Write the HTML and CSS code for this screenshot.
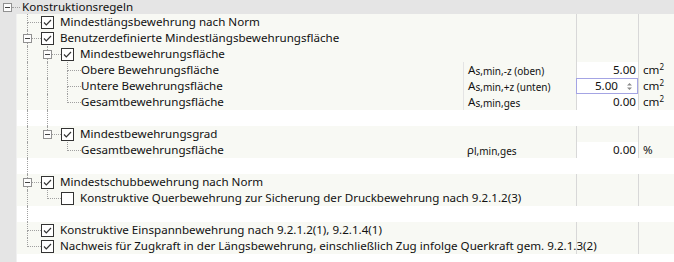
FILE: index.html
```html
<!DOCTYPE html>
<html lang="de">

<head>
    <meta charset="UTF-8">
    <title>Konstruktionsregeln</title>
    <link rel="stylesheet" href="styles.css">
</head>

<body>
    <div class="grid">
        <div class="head">
            <span class="box"></span><span class="head-dash"></span><span class="head-label">Konstruktionsregeln</span>
        </div>
        <div class="main">
            <div class="strip"></div>
            <div class="rows">
                <!-- Mindestlaengsbewehrung -->
                <div class="row">
                    <div class="tree">
                        <span class="c tee"><i class="up"></i><i class="down"></i></span>
                        <span class="cb on"><svg viewBox="0 0 11 11"><path d="M2 5.5 L4.3 7.8 L9 3"/></svg></span>
                        <span class="label">Mindestlängsbewehrung nach Norm</span>
                    </div>
                    <div class="sym"></div><div class="val"></div><div class="unit"></div>
                </div>
                <div class="row">
                    <div class="tree">
                        <span class="c tee"><i class="up short"></i><span class="mid"><span class="box"></span><i class="dash"></i></span><i class="down"></i></span>
                        <span class="cb on"><svg viewBox="0 0 11 11"><path d="M2 5.5 L4.3 7.8 L9 3"/></svg></span>
                        <span class="label">Benutzerdefinierte Mindestlängsbewehrungsfläche</span>
                    </div>
                    <div class="sym"></div><div class="val"></div><div class="unit"></div>
                </div>
                <div class="row">
                    <div class="tree">
                        <i class="g v"></i>
                        <span class="c tee"><i class="up short"></i><span class="mid"><span class="box"></span><i class="dash"></i></span><i class="down"></i></span>
                        <span class="cb on"><svg viewBox="0 0 11 11"><path d="M2 5.5 L4.3 7.8 L9 3"/></svg></span>
                        <span class="label">Mindestbewehrungsfläche</span>
                    </div>
                    <div class="sym"></div><div class="val"></div><div class="unit"></div>
                </div>
                <div class="row">
                    <div class="tree">
                        <i class="g v"></i><i class="g v"></i>
                        <span class="c tee"><i class="up"></i><i class="down"></i></span>
                        <span class="label">Obere Bewehrungsfläche</span>
                    </div>
                    <div class="sym line">A<sub>s,min,-z (oben)</sub></div>
                    <div class="val num">5.00</div>
                    <div class="unit">cm<sup>2</sup></div>
                </div>
                <div class="row">
                    <div class="tree">
                        <i class="g v"></i><i class="g v"></i>
                        <span class="c tee"><i class="up"></i><i class="down"></i></span>
                        <span class="label">Untere Bewehrungsfläche</span>
                    </div>
                    <div class="sym line">A<sub>s,min,+z (unten)</sub></div>
                    <div class="val num edit">5.00<svg class="spin" viewBox="0 0 7 11"><path d="M1 4.5 L3.5 2 L6 4.5 Z M1 6.5 L3.5 9 L6 6.5 Z"/></svg></div>
                    <div class="unit">cm<sup>2</sup></div>
                </div>
                <div class="row">
                    <div class="tree">
                        <i class="g v"></i><i class="g v"></i>
                        <span class="c end"><i class="up"></i><i class="down"></i></span>
                        <span class="label">Gesamtbewehrungsfläche</span>
                    </div>
                    <div class="sym line">A<sub>s,min,ges</sub></div>
                    <div class="val num">0.00</div>
                    <div class="unit">cm<sup>2</sup></div>
                </div>
                <div class="row spacer">
                    <div class="tree"><i class="g v"></i><i class="g v"></i></div>
                </div>
                <!-- Mindestbewehrungsgrad -->
                <div class="row">
                    <div class="tree">
                        <i class="g v"></i>
                        <span class="c end"><i class="up short"></i><span class="mid"><span class="box"></span><i class="dash"></i></span><i class="down"></i></span>
                        <span class="cb on"><svg viewBox="0 0 11 11"><path d="M2 5.5 L4.3 7.8 L9 3"/></svg></span>
                        <span class="label">Mindestbewehrungsgrad</span>
                    </div>
                    <div class="sym"></div><div class="val"></div><div class="unit"></div>
                </div>
                <div class="row">
                    <div class="tree">
                        <i class="g v"></i><i class="g"></i>
                        <span class="c end"><i class="up"></i><i class="down"></i></span>
                        <span class="label">Gesamtbewehrungsfläche</span>
                    </div>
                    <div class="sym">ρ<sub>l,min,ges</sub></div>
                    <div class="val num">0.00</div>
                    <div class="unit">%</div>
                </div>
                <div class="row spacer">
                    <div class="tree"><i class="g v"></i></div>
                </div>
                <!-- Schubbewehrung -->
                <div class="row">
                    <div class="tree">
                        <span class="c tee"><i class="up short"></i><span class="mid"><span class="box"></span><i class="dash"></i></span><i class="down"></i></span>
                        <span class="cb on"><svg viewBox="0 0 11 11"><path d="M2 5.5 L4.3 7.8 L9 3"/></svg></span>
                        <span class="label">Mindestschubbewehrung nach Norm</span>
                    </div>
                    <div class="sym"></div><div class="val"></div><div class="unit"></div>
                </div>
                <div class="row">
                    <div class="tree">
                        <i class="g v"></i>
                        <span class="c end"><i class="up"></i><i class="down"></i></span>
                        <span class="cb"></span>
                        <span class="label">Konstruktive Querbewehrung zur Sicherung der Druckbewehrung nach 9.2.1.2(3)</span>
                    </div>
                    <div class="sym"></div><div class="val"></div><div class="unit"></div>
                </div>
                <div class="row spacer">
                    <div class="tree"><i class="g v"></i></div>
                </div>
                <!-- Einspannung / Zugkraft -->
                <div class="row">
                    <div class="tree">
                        <span class="c tee"><i class="up"></i><i class="down"></i></span>
                        <span class="cb on"><svg viewBox="0 0 11 11"><path d="M2 5.5 L4.3 7.8 L9 3"/></svg></span>
                        <span class="label">Konstruktive Einspannbewehrung nach 9.2.1.2(1), 9.2.1.4(1)</span>
                    </div>
                    <div class="sym"></div><div class="val"></div><div class="unit"></div>
                </div>
                <div class="row">
                    <div class="tree">
                        <span class="c end"><i class="up"></i><i class="down"></i></span>
                        <span class="cb on"><svg viewBox="0 0 11 11"><path d="M2 5.5 L4.3 7.8 L9 3"/></svg></span>
                        <span class="label">Nachweis für Zugkraft in der Längsbewehrung, einschließlich Zug infolge Querkraft gem. 9.2.1.3(2)</span>
                    </div>
                    <div class="sym"></div><div class="val"></div><div class="unit"></div>
                </div>
            </div>
        </div>
    </div>
</body>

</html>
```

FILE: styles.css
```css
* {
    box-sizing: border-box;
}

body {
    margin: 0;
    font-family: "Noto Sans", "Open Sans", sans-serif;
    font-size: 11.6px;
    color: #111;
    background: #fff;
}

.grid {
    width: 674px;
    height: 262px;
    overflow: hidden;
    display: flex;
    flex-direction: column;
}

.head {
    height: 14px;
    flex: none;
    background: #e5e5e5;
    display: flex;
    align-items: center;
    padding-left: 3px;
}

.head-dash {
    width: 8px;
    border-top: 1px dotted #a0a0a0;
}

.head-label {
    margin-left: 2px;
    line-height: 14px;
}

.main {
    flex: 1;
    display: flex;
}

.strip {
    width: 17px;
    flex: none;
    background: #e5e5e5;
    border-right: 1px solid #f0f0f0;
}

.rows {
    flex: 1;
    display: flex;
    flex-direction: column;
}

.row {
    height: 16px;
    flex: none;
    display: grid;
    grid-template-columns: 446px 113px 62px 36px;
    background: #f8f9f4;
    line-height: 16px;
    white-space: nowrap;
}

.row.spacer {
    background: #fff;
}

/* tree part */
.tree {
    display: flex;
    height: 16px;
}

.g {
    width: 10px;
    margin-left: 10px;
    flex: none;
}

.g.v {
    border-left: 1px dotted #a0a0a0;
}

.c {
    width: 24px;
    flex: none;
    display: flex;
    flex-direction: column;
}

.c .up {
    height: 9px;
    margin-left: 10px;
    border-left: 1px dotted #a0a0a0;
    border-bottom: 1px dotted #a0a0a0;
}

.c .up.short {
    height: 4px;
    border-bottom: none;
}

.c .down {
    flex: 1;
    margin-left: 10px;
    border-left: 1px dotted #a0a0a0;
}

.c.end .down {
    border-left: none;
}

.mid {
    height: 9px;
    margin-left: 6px;
    display: flex;
    align-items: center;
}

.dash {
    flex: 1;
    border-top: 1px dotted #a0a0a0;
}

.box {
    width: 9px;
    height: 9px;
    flex: none;
    border: 1px solid #919191;
    background: #fdfdfd;
    display: flex;
    align-items: center;
    justify-content: center;
}

.box::after {
    content: "";
    width: 5px;
    height: 1px;
    background: #444;
}

.cb {
    width: 13px;
    height: 13px;
    flex: none;
    align-self: center;
    margin-right: 6px;
    border: 1px solid #333;
    background: #fff;
    display: flex;
}

.cb svg {
    width: 11px;
    height: 11px;
    fill: none;
    stroke: #333;
    stroke-width: 1.2;
}

/* value columns */
.sym {
    padding-left: 4px;
}

.sym.line {
    border-left: 1px solid #e4e4e4;
}

.sym sub {
    font-size: 10px;
    vertical-align: -1px;
    line-height: 0;
}

.val,
.unit {
    border-left: 1px solid #d8d8d8;
}

.val.num {
    background: #fff;
    text-align: right;
    padding-right: 2px;
}

.val.edit {
    border: 1px solid #a4a4e4;
    display: flex;
    align-items: center;
    justify-content: flex-end;
    padding-right: 4px;
    line-height: 14px;
}

.spin {
    width: 7px;
    height: 11px;
    margin-left: 8px;
    fill: #8a8a8a;
}

.unit {
    padding-left: 4px;
}

.unit sup {
    font-size: 8px;
    vertical-align: 4px;
    line-height: 0;
}
```
